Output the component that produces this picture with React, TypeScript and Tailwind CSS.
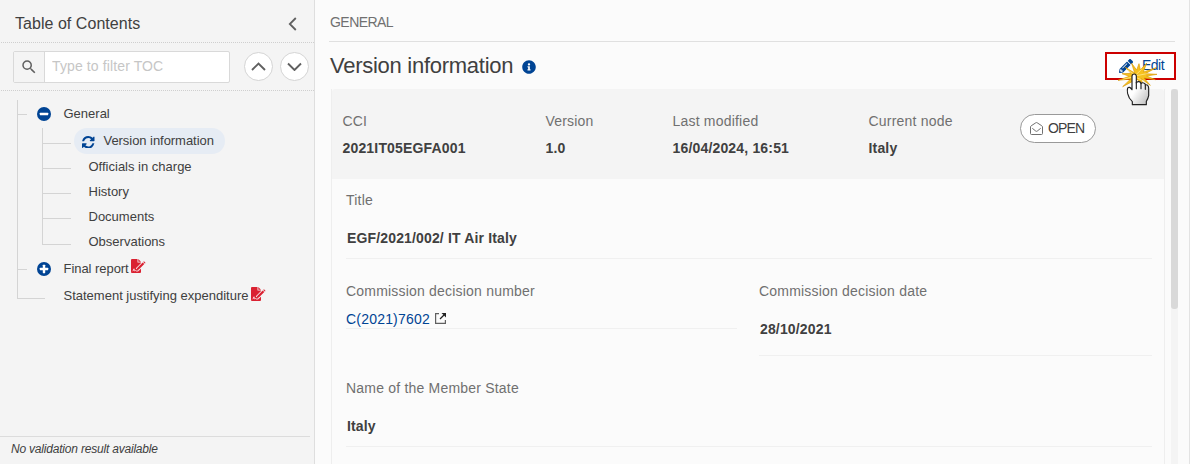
import { FaInfoCircle, FaPencilAlt } from "react-icons/fa";
import { MdSearch } from "react-icons/md";

const sections = ["Officials in charge", "History", "Documents"];

const summary = [
  { label: "CCI", value: "2021IT05EGFA001", width: "w-[203px]" },
  { label: "Version", value: "1.0", width: "w-[127px]" },
  { label: "Last modified", value: "16/04/2024, 16:51", width: "w-[196px]" },
  { label: "Current node", value: "Italy", width: "w-[152px]" },
];

export default function App() {
  return (
    <div className="flex h-[464px] w-[1190px] overflow-hidden bg-[#fbfbfb] font-['Liberation_Sans',Arial,sans-serif] text-[#404040]">
      <Sidebar />
      <main className="flex flex-1 flex-col border-r border-[#e3e3e3] pl-[14px]">
        <div className="mr-[14px] flex h-[42px] items-center border-b border-[#e0e0e0] pt-[3px] pl-px text-[14px] leading-4 tracking-[-0.55px] text-[#707070]">
          GENERAL
        </div>
        <div className="mr-[13px] flex h-[47px] justify-between pl-px">
          <h1 className="flex h-[47px] items-center text-[22px] tracking-[-0.27px]">
            Version information
            <FaInfoCircle className="ml-[9px] mt-[2px] size-[14px] text-[#004494]" />
          </h1>
          <EditButton />
        </div>
        <div className="flex min-h-0 flex-1">
          <DetailCard />
          <div className="ml-[6px] w-[7px] bg-[#f4f4f4]">
            <div className="h-[220px] rounded-[3px] bg-[#d9d9d9]" />
          </div>
        </div>
      </main>
    </div>
  );
}

function Sidebar() {
  return (
    <aside className="flex w-[315px] shrink-0 flex-col border-r border-[#dedede] bg-[#f4f4f4]">
      <div className="ml-px flex h-[43px] items-center justify-between border-b border-dotted border-[#cfcfcf] pt-[5px] pl-[14px] pr-[17px]">
        <h2 className="text-[16px] tracking-[0.04px]">Table of Contents</h2>
        <svg viewBox="0 0 9 14" className="h-[14px] w-[9px]" fill="none" stroke="#606060" strokeWidth="1.8">
          <path d="M7.8 1 1.8 7l6 6" />
        </svg>
      </div>

      <div className="ml-px flex h-[48px] items-center border-b border-dotted border-[#cfcfcf] pl-[12px]">
        <div className="flex h-[32px] w-[217px] overflow-hidden rounded-[2px] border border-[#d9d9d9] bg-white">
          <span className="flex w-[31px] items-center justify-center border-r border-[#d9d9d9] bg-[#f4f4f4]">
            <MdSearch className="size-[18px] text-[#606060]" />
          </span>
          <input
            placeholder="Type to filter TOC"
            className="min-w-0 flex-1 pl-[7px] text-[14px] tracking-[0.12px] outline-none placeholder:text-[#c6c6c6]"
          />
        </div>
        <RoundButton path="M1 8l6.5-6.5L14 8" className="ml-[14px]" />
        <RoundButton path="M1 1.500l6.500 6.500L14 1.500" className="ml-[7px]" />
      </div>

      <div className="mt-[9px] ml-[17px] h-[199px] border-l border-[#d4d4d4] text-[13px] leading-[15px]">
        <div className="flex h-[28px] items-center">
          <span className="h-px w-[9px] bg-[#d4d4d4]" />
          <ToggleIcon open />
          <span className="mb-px ml-[13px]">General</span>
        </div>

        <div className="ml-[24px] h-[117px] border-l border-[#d4d4d4] pt-[3px]">
          <div className="flex h-[25px] items-center">
            <span className="h-px w-[28px] bg-[#d4d4d4]" />
            <span className="mb-[5px] ml-[3px] flex h-[26px] w-[151px] shrink-0 items-center rounded-full bg-[#e6ecf4] pl-[8px]">
              <RefreshIcon />
              <span className="ml-[9px] mb-[2px] whitespace-nowrap tracking-[-0.05px]">Version information</span>
            </span>
          </div>
          {sections.map((name) => (
            <div key={name} className="flex h-[25px] items-center">
              <span className="h-px w-[28px] bg-[#d4d4d4]" />
              <span className="mb-[5px] ml-[17.500px]">{name}</span>
            </div>
          ))}
          <div className="flex h-[25px] items-center">
            <span className="mt-px h-px w-[28px] bg-[#d4d4d4]" />
            <span className="mb-[5px] ml-[17.500px]">Observations</span>
          </div>
        </div>

        <div className="mt-[10px] flex h-[28px] items-center">
          <span className="h-px w-[9px] bg-[#d4d4d4]" />
          <ToggleIcon />
          <span className="mb-px ml-[13px] tracking-[-0.05px]">Final report</span>
          <SignedPdfIcon />
        </div>
        <div className="flex h-[31px] items-center">
          <span className="h-px w-[27px] bg-[#d4d4d4]" />
          <span className="mb-[7px] ml-[18.500px]">Statement justifying expenditure</span>
          <SignedPdfIcon className="mb-[10px]" />
        </div>
      </div>

      <div className="mt-auto mr-[4px] h-[28px] border-t border-[#dcdcdc] pt-[5px] pl-[11px] text-[12px] leading-[15px] tracking-[-0.2px] italic">
        No validation result available
      </div>
    </aside>
  );
}

function RoundButton({ path, className }: { path: string; className: string }) {
  return (
    <button
      className={`flex size-[29px] items-center justify-center rounded-full border border-[#d4d4d4] bg-white ${className}`}
    >
      <svg viewBox="0 0 15 9.500" className="h-[9.5px] w-[15px]" fill="none" stroke="#606060" strokeWidth="1.9">
        <path d={path} />
      </svg>
    </button>
  );
}

function ToggleIcon({ open }: { open?: boolean }) {
  return (
    <svg viewBox="0 0 14 14" className="ml-[9.500px] size-[14px]">
      <circle cx="7" cy="7" r="7" fill="#004494" />
      <rect x="2.800" y="5.800" width="8.400" height="2.400" rx="0.4" fill="#fff" />
      {!open && <rect x="5.800" y="2.800" width="2.400" height="8.400" rx="0.4" fill="#fff" />}
    </svg>
  );
}

function RefreshIcon() {
  return (
    <svg viewBox="0 128 1536 1536" className="mt-[2px] size-[12.500px] shrink-0" fill="#004494">
      <path d="M1511 1056q0 5-1 7-64 268-268 434.500t-478 166.500q-146 0-282.500-55t-243.500-157l-129 129q-19 19-45 19t-45-19-19-45v-448q0-26 19-45t45-19h448q26 0 45 19t19 45-19 45l-137 137q71 66 161 102t187 36q134 0 250-65t186-179q11-17 53-117 8-23 30-23h192q13 0 22.500 9.500t9.500 22.500zm25-800v448q0 26-19 45t-45 19h-448q-26 0-45-19t-19-45 19-45l138-138q-148-137-349-137-134 0-250 65t-186 179q-11 17-53 117-8 23-30 23h-199q-13 0-22.500-9.500t-9.500-22.500v-7q65-268 270-434.500t480-166.500q146 0 284 55.500t245 156.500l130-129q19-19 45-19t45 19 19 45z" />
    </svg>
  );
}

function SignedPdfIcon({ className = "mb-[6px]" }: { className?: string }) {
  return (
    <svg viewBox="0 0 15 14" className={`ml-[2.500px] h-[14px] w-[15px] shrink-0 ${className}`}>
      <path d="M1 0h5.500v3.600H10V13a1 1 0 0 1-1 1H1a1 1 0 0 1-1-1V1a1 1 0 0 1 1-1z" fill="#da2131" />
      <path d="M7.300 0L10 2.800H7.300z" fill="#da2131" />
      <path d="M6.200 10.600l6.800-6.800" stroke="#f4f4f4" strokeWidth="4" />
      <path d="M5.600 11.200l.6-2.200 5.500-5.500 1.600 1.600-5.500 5.500zM12.200 3l.8-.7 1.600 1.600-.8.7z" fill="#da2131" />
      <path d="M1.500 12.200c.8-.5 1.300-1.300 1.500-2.400.2 1 .1 2.200.6 2 .4-.200.5-.600.9-.3.300.300.400.500.800.500h2" fill="none" stroke="#fff" strokeWidth="0.8" />
    </svg>
  );
}

function EditButton() {
  return (
    <button className="relative mt-[10px] flex h-[28px] w-[71px] items-center border-2 border-[#cc0000] bg-white pl-[12px] text-[14px] tracking-[-0.5px] text-[#004494]">
      <FaPencilAlt className="size-[14px]" />
      <span className="mb-px ml-[9px]">Edit</span>
      <ClickCursor />
    </button>
  );
}

function ClickCursor() {
  return (
    <svg viewBox="0 0 240 195" className="absolute -top-[9px] -left-[7px] h-[65px] w-[80px]">
      <defs>
        <linearGradient id="hand" x1="0" y1="0" x2="1" y2="1">
          <stop offset="0.45" stopColor="#fff" />
          <stop offset="1" stopColor="#b8b8b8" />
        </linearGradient>
      </defs>
      <path
        d="M104 84L76 67l17 18-27 1 22 8-34 12 38-4-24 23 34-18 10-3 16 11-5-14 28 20-19-22 34 5-26-11 31-5-35-2 33-18-39 13 10-27-19 21-4-19-7 19-15-20z"
        fill="#f6c11f"
        stroke="#d99a08"
        strokeWidth="2"
      />
      <path d="M105 90L84 76M107 90l18-17M110 92l30-6M94 97l-26 6M112 99l23 10" stroke="#fff0a0" strokeWidth="2" />
      <path
        d="M96 134V94q0-7 6.500-7t6.500 7v20q2-5 8-4 6 1 6 6 3-4 8-2 5 1 5 6 3-2 7 1 3 3 3 9v22q-2 10-7 17v10h-42v-9q-11-10-14-24-2-11 0-17 5-6 13 5z"
        fill="url(#hand)"
        stroke="#222"
        strokeWidth="3.500"
        strokeLinejoin="round"
      />
      <path d="M109 112v19M123 116v15M136 121v12" stroke="#222" strokeWidth="3.500" strokeLinecap="round" />
    </svg>
  );
}

function DetailCard() {
  return (
    <section className="ml-[2px] w-[834px] border-x border-[#eeeeee] text-[14px] leading-4 tracking-[0.2px]">
      <div className="flex h-[90px] rounded-t-[3px] bg-[#f4f4f4] pt-[24px] pl-[10.500px]">
        {summary.map((item) => (
          <div key={item.label} className={`shrink-0 ${item.width}`}>
            <p className="text-[#707070]">{item.label}</p>
            <p className="mt-[11px] font-bold tracking-[0.17px]">{item.value}</p>
          </div>
        ))}
        <div className="mt-px -ml-[0.5px] flex h-[29px] w-[76px] items-center rounded-full border border-[#999] bg-white pl-[9px] tracking-[-0.85px]">
          <OpenMailIcon />
          <span className="mb-[2px] ml-[5px]">OPEN</span>
        </div>
      </div>

      <div className="pt-[13px] pl-[14px]">
        <div className="w-[806px] border-b border-[#f0f0f0] pb-[12px]">
          <Label>Title</Label>
          <Value>EGF/2021/002/ IT Air Italy</Value>
        </div>
        <div className="mt-[24px] flex items-start gap-[22px]">
          <div className="h-[46px] w-[391px] border-b border-[#f0f0f0]">
            <Label>Commission decision number</Label>
            <a className="mt-[12px] flex items-center text-[#004494]">
              C(2021)7602
              <ExternalIcon />
            </a>
          </div>
          <div className="w-[393px] border-b border-[#f0f0f0] pb-[18px]">
            <Label>Commission decision date</Label>
            <Value>28/10/2021</Value>
          </div>
        </div>
        <div className="mt-[24px] w-[806px] border-b border-[#f0f0f0] pb-[12px]">
          <Label>Name of the Member State</Label>
          <Value>Italy</Value>
        </div>
      </div>
    </section>
  );
}

function Label({ children }: { children: React.ReactNode }) {
  return <p className="text-[#707070]">{children}</p>;
}

function Value({ children }: { children: React.ReactNode }) {
  return <p className="mt-[22px] pl-px font-bold tracking-[0.15px]">{children}</p>;
}

function OpenMailIcon() {
  return (
    <svg viewBox="0 0 13 13" className="size-[13px]" fill="none" stroke="#707070" strokeWidth="1">
      <path d="M.5 5v6.500a1 1 0 0 0 1 1h10a1 1 0 0 0 1-1V5q0-.7-.7-1.200L7.200.8q-.7-.5-1.400 0L1.200 3.800Q.5 4.300.5 5zM2.300 6.300l3.500 2.800q.7.500 1.400 0l3.500-2.800" />
    </svg>
  );
}

function ExternalIcon() {
  return (
    <svg viewBox="0 0 11 11" className="mb-[2px] ml-[5px] size-[11px]" fill="none">
      <path d="M4 .6H.6v9.800h9.800V7" stroke="#606060" strokeWidth="1.200" />
      <path d="M5 6L9 2" stroke="#222" strokeWidth="1.300" />
      <path d="M6.500 0H11v4.500z" fill="#222" />
    </svg>
  );
}
